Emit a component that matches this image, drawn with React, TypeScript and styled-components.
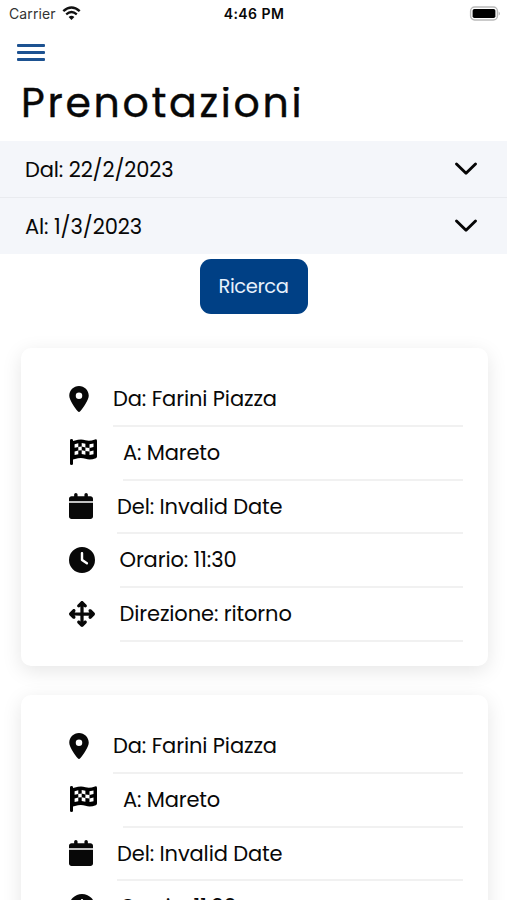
import React from "react";
import styled, { createGlobalStyle } from "styled-components";
import { FaLocationDot, FaCalendar, FaClock, FaArrowsUpDownLeftRight } from "react-icons/fa6";

const GlobalStyle = createGlobalStyle`
  * { box-sizing: border-box; }
  body {
    margin: 0;
    background: #fff;
    color: #080808;
    font-family: Poppins, Inter, sans-serif;
    font-feature-settings: "cv11" 1;
  }
`;

const Screen = styled.div`
  width: 507px;
  height: 900px;
  overflow: hidden;
  display: flex;
  flex-direction: column;
  background: #fff;
`;

const StatusBar = styled.div`
  height: 28px;
  flex: none;
  display: grid;
  grid-template-columns: 1fr auto 1fr;
  align-items: center;
  padding: 0 6px 1px 9px;
  font-family: Inter, sans-serif;
  font-feature-settings: normal;
  font-size: 14px;
`;

const Carrier = styled.div`
  display: flex;
  align-items: center;
  gap: 6px;
  color: #333;
  letter-spacing: 0.1px;
`;

const Clock = styled.div`
  padding-right: 2px;
  font-weight: 600;
  font-size: 14px;
  letter-spacing: 0.45px;
`;

const Battery = styled.svg`
  justify-self: end;
  display: block;
`;

const Toolbar = styled.div`
  height: 59px;
  flex: none;
  padding: 16px 17px;
`;

const MenuButton = styled.button`
  display: flex;
  flex-direction: column;
  gap: 4.6px;
  width: 28px;
  padding: 0;
  border: 0;
  background: none;
`;

const MenuLine = styled.span`
  height: 2.5px;
  border-radius: 1px;
  background: #1d5291;
`;

const Title = styled.h1`
  height: 54px;
  flex: none;
  margin: 0;
  padding-left: 21px;
  overflow: hidden;
  font-size: 41px;
  font-weight: 400;
  line-height: 32px;
  letter-spacing: 2.7px;
  white-space: nowrap;
  -webkit-text-stroke: 0.4px #080808;
`;

const DateRow = styled.div<{ $divided?: boolean }>`
  height: ${(p) => (p.$divided ? 57 : 56)}px;
  flex: none;
  display: flex;
  align-items: center;
  justify-content: space-between;
  padding: 0 29px 0 25px;
  background: #f4f6fa;
  border-bottom: ${(p) => (p.$divided ? "1px solid #e9ebef" : "0")};

  span {
    padding-top: 1px;
  }
`;

const Text = styled.span<{ $spacing: number }>`
  font-size: 21px;
  line-height: 30px;
  white-space: nowrap;
  letter-spacing: ${(p) => p.$spacing}px;
`;

const SearchButton = styled.button`
  flex: none;
  align-self: center;
  width: 108px;
  height: 55px;
  margin: 5px 0 34px;
  padding: 0;
  border: 0;
  border-radius: 11px;
  background: #004085;
  color: #e6f0fc;
  font-family: inherit;
  font-feature-settings: inherit;
  font-size: 19.5px;
  letter-spacing: -0.4px;
`;

const Card = styled.section`
  flex: none;
  width: 467px;
  height: 318px;
  margin: 0 0 29px 21px;
  padding: 25px 25px 0 48px;
  border-radius: 10px;
  background: #fff;
  box-shadow: 0 5px 20px rgba(0, 0, 0, 0.1);
`;

const Item = styled.div`
  height: 53.8px;
  display: flex;
`;

const IconSlot = styled.div<{ $slot: number; $inset: number; $icon: number }>`
  flex: none;
  width: ${(p) => p.$slot}px;
  padding: 12.5px 0 0 ${(p) => p.$inset}px;

  svg {
    display: block;
    width: ${(p) => p.$icon}px;
    height: 26px;
  }
`;

const ItemLabel = styled.div`
  flex: 1;
  padding-top: 11px;
  border-bottom: 2px solid #f1f1f1;
`;

const CheckeredFlag = () => (
  <svg viewBox="0 0 27 26">
    <path
      d="M0 1.3Q0 0 1.5 0T3 1.3V2L8 .8Q11.8 0 15.5 1.2Q19.5 2.5 25 .4Q27 0 27 1.8V17.6Q27 18.8 25.8 19.3Q20 21.4 15.5 19.8Q11.5 18.4 8 19.3L3 20.5V24.7Q3 26 1.5 26T0 24.7Z"
      fill="#000"
    />
    <path
      d="M4.6 5.3L8.3 4.3V7.9L4.6 8.8ZM11.7 4L15.4 4.8V8.4L11.7 7.6ZM19.5 5.3L23.5 4.4V8L19.5 8.9ZM8.3 7.9L11.7 7.6V11.2L8.3 11.5ZM15.4 8.4L19.5 8.9V12.5L15.4 12ZM4.6 12.4L8.3 11.5V15.2L4.6 16.1ZM11.7 11.2L15.4 12V15.7L11.7 14.9ZM19.5 12.5L23.5 11.6V15.2L19.5 16.1Z"
      fill="#fff"
    />
  </svg>
);

interface Entry {
  icon: React.ReactNode;
  iconWidth: number;
  label: string;
  slot: number;
  inset?: number;
  spacing: number;
}

const entries: Entry[] = [
  { icon: <FaLocationDot />, iconWidth: 20, label: "Da: Farini Piazza", slot: 44, spacing: -0.12 },
  { icon: <CheckeredFlag />, iconWidth: 27, label: "A: Mareto", slot: 54, inset: 1, spacing: -0.15 },
  {
    icon: <FaCalendar preserveAspectRatio="none" />,
    iconWidth: 24,
    label: "Del: Invalid Date",
    slot: 48,
    spacing: -0.12,
  },
  { icon: <FaClock />, iconWidth: 26, label: "Orario: 11:30", slot: 50.5, spacing: -0.12 },
  {
    icon: <FaArrowsUpDownLeftRight />,
    iconWidth: 26,
    label: "Direzione: ritorno",
    slot: 50.5,
    spacing: -0.12,
  },
];

const Chevron = () => (
  <svg width="24" height="16" viewBox="0 0 24 16" fill="none">
    <path
      d="M2.5 3L12 12.3L21.5 3"
      stroke="#050505"
      strokeWidth="2.9"
      strokeLinecap="round"
      strokeLinejoin="round"
    />
  </svg>
);

const Wifi = () => (
  <svg width="19" height="15" viewBox="0 0 19 15" fill="none">
    <path d="M1.3 5.1Q9.5 -2.1 17.7 5.1" stroke="#111" strokeWidth="2.5" />
    <path d="M4.2 8.3Q9.5 3.7 14.8 8.3" stroke="#111" strokeWidth="2.3" />
    <path d="M6.6 11Q9.5 8.4 12.4 11L9.5 14Z" fill="#111" />
  </svg>
);

const Booking = () => (
  <Card>
    {entries.map(({ icon, iconWidth, label, slot, inset = 0, spacing }) => (
      <Item key={label}>
        <IconSlot $slot={slot} $inset={inset} $icon={iconWidth}>
          {icon}
        </IconSlot>
        <ItemLabel>
          <Text $spacing={spacing}>{label}</Text>
        </ItemLabel>
      </Item>
    ))}
  </Card>
);

export default function App() {
  return (
    <Screen>
      <GlobalStyle />
      <StatusBar>
        <Carrier>
          Carrier
          <Wifi />
        </Carrier>
        <Clock>4:46 PM</Clock>
        <Battery width="32" height="15" viewBox="0 0 32 15">
          <rect x="1.6" y="1" width="26.8" height="13" rx="4" fill="#fff" stroke="#b9b9b9" strokeWidth="1.4" />
          <rect x="3.6" y="3" width="22.8" height="9" rx="1.8" fill="#000" />
          <path d="M29.7 5.4Q32 7.5 29.7 9.6Z" fill="#b0b0b0" />
        </Battery>
      </StatusBar>
      <Toolbar>
        <MenuButton aria-label="Menu">
          <MenuLine />
          <MenuLine />
          <MenuLine />
        </MenuButton>
      </Toolbar>
      <Title>Prenotazioni</Title>
      <DateRow $divided>
        <Text $spacing={-0.12}>Dal: 22/2/2023</Text>
        <Chevron />
      </DateRow>
      <DateRow>
        <Text $spacing={-0.1}>Al: 1/3/2023</Text>
        <Chevron />
      </DateRow>
      <SearchButton>Ricerca</SearchButton>
      <Booking />
      <Booking />
    </Screen>
  );
}
